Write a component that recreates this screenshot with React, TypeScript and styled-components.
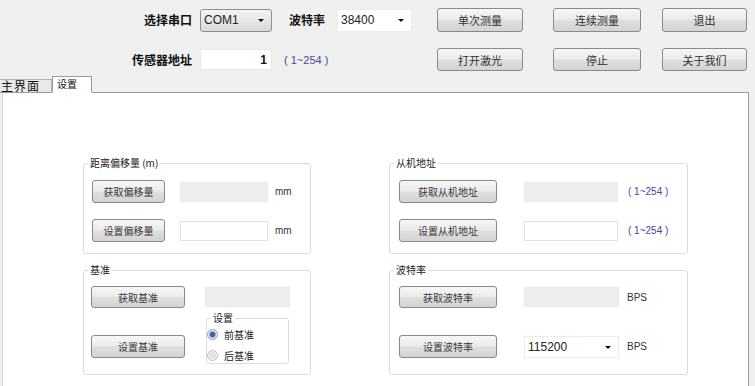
import React from 'react';
import styled, { createGlobalStyle } from 'styled-components';

const Global = createGlobalStyle`
  html, body { margin: 0; padding: 0; background: #f0f0f0; }
  #root { width: 755px; height: 386px; }
`;

const CJK = `"Noto Sans CJK SC", "Liberation Sans", sans-serif`;
const LATIN = `"Liberation Sans", "Noto Sans CJK SC", sans-serif`;

const Window = styled.div`
  width: 755px;
  height: 386px;
  overflow: hidden;
  background: #f0f0f0;
  display: flex;
  flex-direction: column;
  font-family: ${CJK};
  color: #1e1e1e;
`;

const TopBar = styled.div`
  height: 76px;
  box-sizing: border-box;
  padding-top: 8px;
  display: grid;
  grid-template-columns: 192px 8px 72px 65px 75px 25px 86px 30px 88px 21px 85px;
  grid-template-rows: 24px 23px;
  row-gap: 16px;
  grid-template-areas:
    "l1 . c1 l2 c2 . b1 . b2 . b3"
    "l3 . i1 r1 r1 . b4 . b5 . b6";
  align-items: center;
`;

const BoldLabel = styled.div<{ $area: string; $end?: boolean; $indent?: number }>`
  grid-area: ${p => p.$area};
  justify-self: ${p => (p.$end ? 'end' : 'start')};
  padding-left: ${p => p.$indent ?? 0}px;
  font-family: ${CJK};
  font-weight: 700;
  font-size: 12px;
  line-height: 16px;
  color: #111;
  white-space: nowrap;
`;

const Combo = styled.div<{ $area?: string; $gray?: boolean; $w?: number; $h?: number }>`
  ${p => (p.$area ? `grid-area: ${p.$area};` : '')}
  position: relative;
  box-sizing: border-box;
  width: ${p => (p.$w ? `${p.$w}px` : '100%')};
  height: ${p => p.$h ?? 23}px;
  display: flex;
  align-items: center;
  padding-left: 3px;
  font-family: ${LATIN};
  font-size: 12px;
  color: #222;
  border: 1px solid ${p => (p.$gray ? '#8f8f8f' : '#ececec')};
  border-radius: ${p => (p.$gray ? 3 : 0)}px;
  background: ${p =>
    p.$gray ? 'linear-gradient(#f4f4f4, #e6e6e6 50%, #d9d9d9)' : '#ffffff'};
  &::after {
    content: '';
    position: absolute;
    right: 7px;
    top: 50%;
    margin-top: -1px;
    border-left: 3px solid transparent;
    border-right: 3px solid transparent;
    border-top: 3px solid #111;
  }
`;

const Button = styled.button<{ $area?: string; $w?: number; $h?: number }>`
  ${p => (p.$area ? `grid-area: ${p.$area};` : '')}
  box-sizing: border-box;
  width: ${p => (p.$w ? `${p.$w}px` : '100%')};
  height: ${p => (p.$h ? `${p.$h}px` : '100%')};
  margin: 0;
  padding: 0;
  border: 1px solid #8a8a8a;
  border-radius: 3px;
  background: linear-gradient(#f7f7f7, #ececec 45%, #dedede 55%, #d3d3d3);
  font-family: ${CJK};
  font-size: 11px;
  color: #333;
  cursor: default;
  flex-shrink: 0;
`;

const GroupButton = styled(Button)`
  font-size: 10px;
  color: #3a3a3a;
`;

const AddrInput = styled.div<{ $area: string }>`
  grid-area: ${p => p.$area};
  box-sizing: border-box;
  height: 21px;
  background: #fff;
  border: 1px solid #e8e8e8;
  display: flex;
  align-items: center;
  justify-content: flex-end;
  padding-right: 4px;
  font-family: ${LATIN};
  font-weight: 700;
  font-size: 12px;
  color: #111;
`;

const Range = styled.div<{ $area?: string; $indent?: number; $size?: number }>`
  ${p => (p.$area ? `grid-area: ${p.$area};` : '')}
  padding-left: ${p => p.$indent ?? 0}px;
  font-family: ${LATIN};
  font-size: ${p => p.$size ?? 11}px;
  color: #3d4a9c;
  white-space: nowrap;
`;

const TabStrip = styled.div`
  height: 17px;
  display: flex;
  align-items: flex-end;
  margin-bottom: -1px;
  position: relative;
  z-index: 1;
`;

const Tab = styled.div<{ $active?: boolean; $w: number }>`
  box-sizing: border-box;
  width: ${p => p.$w}px;
  height: ${p => (p.$active ? 17 : 14)}px;
  padding-left: ${p => (p.$active ? 4 : 1)}px;
  border: 1px solid ${p => (p.$active ? '#9a9a9a' : '#b4b4b4')};
  border-bottom: ${p => (p.$active ? '1px solid #fff' : '1px solid #9a9a9a')};
  border-left: ${p => (p.$active ? '1px solid #9a9a9a' : 'none')};
  background: ${p => (p.$active ? '#fff' : '#e9e9e9')};
  font-family: ${CJK};
  font-size: ${p => (p.$active ? 10 : 12)}px;
  line-height: ${p => (p.$active ? 14 : 12)}px;
  color: #111;
  letter-spacing: ${p => (p.$active ? 0 : 1)}px;
  white-space: nowrap;
`;

const Pane = styled.div`
  flex: 1;
  background: #fff;
  border-top: 1px solid #9a9a9a;
  border-right: 1px solid #9a9a9a;
  border-left: 1px solid #d6d6d6;
  margin-left: 2px;
  margin-right: 6px;
`;

const Groups = styled.div`
  margin: 63px 0 0 80px;
  display: grid;
  grid-template-columns: 228px 299px;
  column-gap: 78px;
  row-gap: 9px;
  align-items: stretch;
`;

const Group = styled.fieldset`
  margin: 0;
  padding: 0;
  min-width: 0;
  border: 1px solid #dcdcdc;
  border-radius: 3px;
`;

const Legend = styled.legend<{ $offset?: number }>`
  margin-left: ${p => p.$offset ?? 4}px;
  padding: 0 2px;
  font-family: ${CJK};
  font-size: 10px;
  line-height: 14px;
  color: #222;
`;

const Body = styled.div<{ $pad: string; $gap: number }>`
  padding: ${p => p.$pad};
  display: flex;
  flex-direction: column;
  gap: ${p => p.$gap}px;
`;

const Row = styled.div<{ $h?: number; $align?: string }>`
  display: flex;
  align-items: ${p => p.$align ?? 'center'};
  height: ${p => (p.$h ? `${p.$h}px` : 'auto')};
`;

const Field = styled.div<{ $w: number; $ml: number; $white?: boolean }>`
  box-sizing: border-box;
  width: ${p => p.$w}px;
  height: 20px;
  margin-left: ${p => p.$ml}px;
  background: ${p => (p.$white ? '#fff' : '#ededed')};
  border: 1px solid ${p => (p.$white ? '#e2e2e2' : '#e9e9e9')};
  flex-shrink: 0;
`;

const Unit = styled.span<{ $ml: number }>`
  margin-left: ${p => p.$ml}px;
  font-family: ${LATIN};
  font-size: 10px;
  color: #333;
  white-space: nowrap;
`;

const SubGroup = styled.fieldset`
  margin: 0 0 0 21px;
  padding: 1px 0 0 0;
  width: 83px;
  box-sizing: border-box;
  min-width: 0;
  border: 1px solid #dcdcdc;
  border-radius: 3px;
`;

const RadioRow = styled.label`
  display: flex;
  align-items: center;
  height: 16px;
  gap: 6px;
  font-family: ${CJK};
  font-size: 10px;
  color: #222;
`;

const RadioDot = styled.span<{ $checked?: boolean }>`
  box-sizing: border-box;
  width: 11px;
  height: 11px;
  border-radius: 50%;
  border: 1px solid ${p => (p.$checked ? '#8fa0b8' : '#bdbdbd')};
  background: ${p =>
    p.$checked
      ? 'radial-gradient(circle, #3d5fa8 0 2px, #8ea6d6 3px, #edf1f7 4px)'
      : 'radial-gradient(circle, #e2e2e2 0 3px, #f6f6f6 4px)'};
  flex-shrink: 0;
`;

const Radios = styled.div`
  display: flex;
  flex-direction: column;
  gap: 5px;
`;

export default function App() {
  return (
    <Window>
      <Global />
      <TopBar>
        <BoldLabel $area="l1" $end>选择串口</BoldLabel>
        <Combo $area="c1" $gray>COM1</Combo>
        <BoldLabel $area="l2" $indent={17}>波特率</BoldLabel>
        <Combo $area="c2">38400</Combo>
        <Button $area="b1">单次测量</Button>
        <Button $area="b2">连续测量</Button>
        <Button $area="b3">退出</Button>
        <BoldLabel $area="l3" $end>传感器地址</BoldLabel>
        <AddrInput $area="i1">1</AddrInput>
        <Range $area="r1" $indent={12}>( 1~254 )</Range>
        <Button $area="b4">打开激光</Button>
        <Button $area="b5">停止</Button>
        <Button $area="b6">关于我们</Button>
      </TopBar>

      <TabStrip>
        <Tab $w={52}>主界面</Tab>
        <Tab $w={40} $active>设置</Tab>
      </TabStrip>

      <Pane>
        <Groups>
          <Group>
            <Legend>距离偏移量 (m)</Legend>
            <Body $pad="10px 0 11px 8px" $gap={16}>
              <Row $h={23}>
                <GroupButton $w={73}>获取偏移量</GroupButton>
                <Field $w={88} $ml={15} />
                <Unit $ml={7}>mm</Unit>
              </Row>
              <Row $h={23}>
                <GroupButton $w={73}>设置偏移量</GroupButton>
                <Field $w={88} $ml={15} $white />
                <Unit $ml={7}>mm</Unit>
              </Row>
            </Body>
          </Group>

          <Group>
            <Legend>从机地址</Legend>
            <Body $pad="10px 0 11px 9px" $gap={16}>
              <Row $h={23}>
                <GroupButton $w={98}>获取从机地址</GroupButton>
                <Field $w={94} $ml={27} />
                <Range $indent={10} $size={10}>( 1~254 )</Range>
              </Row>
              <Row $h={23}>
                <GroupButton $w={98}>设置从机地址</GroupButton>
                <Field $w={94} $ml={27} $white />
                <Range $indent={10} $size={10}>( 1~254 )</Range>
              </Row>
            </Body>
          </Group>

          <Group>
            <Legend>基准</Legend>
            <Body $pad="9px 0 10px 7px" $gap={3}>
              <Row $h={22}>
                <GroupButton $w={94} $h={22}>获取基准</GroupButton>
                <Field $w={85} $ml={20} />
              </Row>
              <Row $align="flex-end">
                <GroupButton $w={94} $h={23} style={{ marginBottom: 6 }}>设置基准</GroupButton>
                <SubGroup>
                  <Legend $offset={4}>设置</Legend>
                  <Radios>
                    <RadioRow>
                      <RadioDot $checked />
                      前基准
                    </RadioRow>
                    <RadioRow>
                      <RadioDot />
                      后基准
                    </RadioRow>
                  </Radios>
                </SubGroup>
              </Row>
            </Body>
          </Group>

          <Group>
            <Legend>波特率</Legend>
            <Body $pad="9px 0 10px 9px" $gap={27}>
              <Row $h={22}>
                <GroupButton $w={98} $h={22}>获取波特率</GroupButton>
                <Field $w={95} $ml={27} />
                <Unit $ml={8}>BPS</Unit>
              </Row>
              <Row $h={23}>
                <GroupButton $w={98} $h={23}>设置波特率</GroupButton>
                <Combo $w={95} $h={22} style={{ marginLeft: 27 }}>115200</Combo>
                <Unit $ml={8}>BPS</Unit>
              </Row>
            </Body>
          </Group>
        </Groups>
      </Pane>
    </Window>
  );
}
